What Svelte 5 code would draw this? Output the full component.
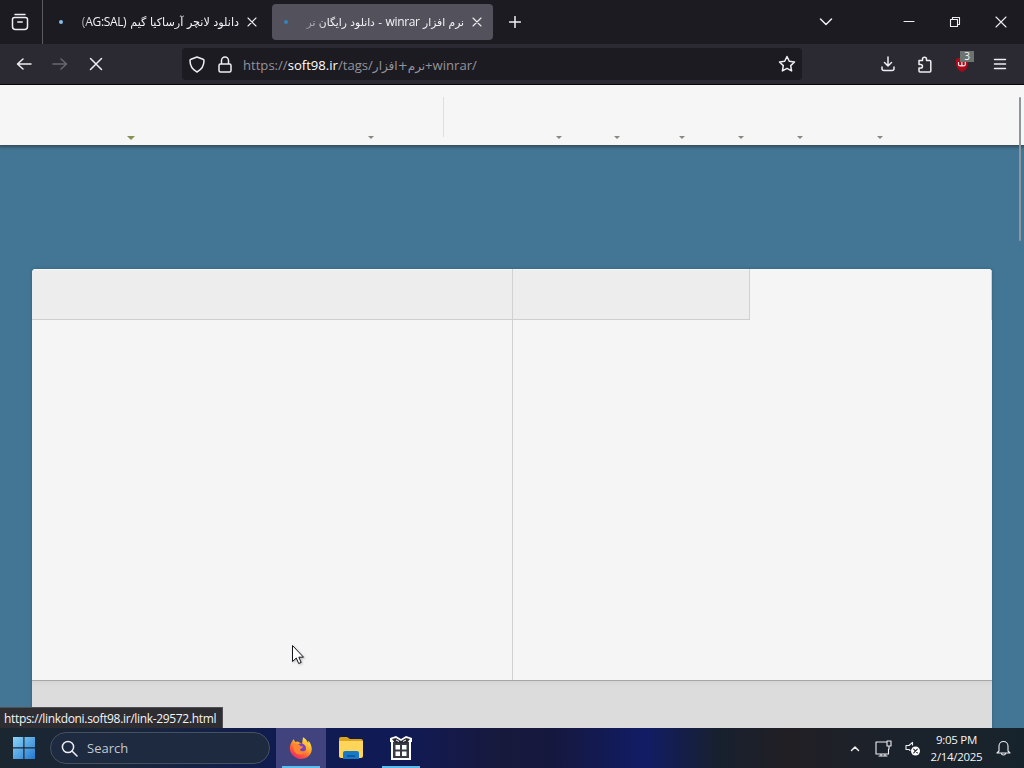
<script lang="ts">
	// Distance of each dropdown arrow from the left edge of the site menu
	const carets = [
		{ x: 131, wide: true },
		{ x: 371 },
		{ x: 559 },
		{ x: 617 },
		{ x: 682 },
		{ x: 741 },
		{ x: 800 },
		{ x: 880 }
	];
</script>

<div class="screen">
	<div class="tabbar">
		<div class="view">
			<svg width="18" height="18" viewBox="0 0 18 18" class="line">
				<path d="M4 1.5h10M3.5 4.5h11q2 0 2 2v7q0 3-3 3h-9q-3 0-3-3v-7q0-2 2-2zM6.8 9h4.4" />
			</svg>
		</div>
		<div class="tab first">
			<i class="dot"></i>
			<span class="title" dir="rtl">دانلود لانچر آرساکیا گیم <b class="latin">(AG:SAL)</b></span>
			<svg class="line thin close" width="10" height="10" viewBox="0 0 10 10"><path d="M1 1l8 8M9 1L1 9" /></svg>
		</div>
		<div class="tab active">
			<i class="dot"></i>
			<span class="title" dir="rtl">نرم افزار <b class="latin">winrar</b> - دانلود رایگان نر</span>
			<svg class="line thin close" width="10" height="10" viewBox="0 0 10 10"><path d="M1 1l8 8M9 1L1 9" /></svg>
		</div>
		<svg class="line plus" width="12" height="12" viewBox="0 0 12 12"><path d="M6 .5v11M.5 6h11" /></svg>
		<svg class="line all" width="14" height="8" viewBox="0 0 14 8"><path d="M1.500 1L7 6.500 12.500 1" /></svg>
		<div class="controls">
			<svg class="line thin" width="12" height="12" viewBox="0 0 12 12"><path d="M1 5.500h10" /></svg>
			<svg class="line thin" width="12" height="12" viewBox="0 0 12 12"><path d="M1.500 3.500h7v7h-7zM3.500 3V1.500h7v7H9" /></svg>
			<svg class="line thin" width="12" height="12" viewBox="0 0 12 12"><path d="M1 1l10 10M11 1L1 11" /></svg>
		</div>
	</div>

	<div class="toolbar">
		<div class="nav">
			<svg class="line" width="16" height="16" viewBox="0 0 16 16"><path d="M15 8H1.500M7 3L1.500 8 7 13" /></svg>
			<svg class="line disabled" width="16" height="16" viewBox="0 0 16 16"><path d="M1 8h13.500M9 3l5.500 5L9 13" /></svg>
			<svg class="line" width="16" height="16" viewBox="0 0 16 16"><path d="M2.500 2.500l11 11M13.500 2.500l-11 11" /></svg>
		</div>
		<div class="urlbar">
			<svg class="line" width="16" height="17" viewBox="0 0 16 17">
				<path d="M8 1l6 2.200q1 .4 1 1.400 0 8-7 11.400Q1 12.600 1 4.600q0-1 1-1.400z" />
			</svg>
			<svg class="line lock" width="14" height="17" viewBox="0 0 14 17">
				<path d="M3.500 8V4.500a3.500 3.500 0 0 1 7 0V8M2.500 8h9q1.500 0 1.500 1.500v5q0 1.500-1.500 1.500h-9Q1 16 1 14.500v-5Q1 8 2.500 8z" />
			</svg>
			<span class="url">https://<em>soft98.ir</em>/tags/<span class="arabic">نرم+افزار</span>+winrar/</span>
			<svg class="line star" width="18" height="18" viewBox="0 0 18 18">
				<path d="M9 1.500l2.300 4.800 5.200.7-3.800 3.600.9 5.300L9 13.400l-4.600 2.500.9-5.300L1.500 7l5.200-.7z" />
			</svg>
		</div>
		<div class="tools">
			<svg class="line" width="16" height="16" viewBox="0 0 16 16">
				<path d="M8 1v9M4.500 6.500L8 10l3.500-3.500M2 11v1.500q0 2 2 2h8q2 0 2-2V11" />
			</svg>
			<svg class="line" width="16" height="17" viewBox="0 0 16 17">
				<path d="M2 4.500h3.500V3.200a2 2 0 0 1 4 0v1.300h3.300q1 0 1 1V15q0 1-1 1H3q-1 0-1-1v-3h1.700a1.800 1.800 0 0 0 0-3.600H2z" />
			</svg>
			<div class="ublock">
				<svg width="18" height="18" viewBox="0 0 18 18">
					<path d="M8 2l6 2v5q0 5-6 8-6-3-6-8V4z" fill="#a90a1c" />
					<path d="M4.500 7v2.500q0 1.300 1.700 1.300t1.700-1.300V7m0 2.500q0 1.300 1.700 1.300t1.700-1.300V7" fill="none" stroke="#f7dfe0" stroke-width="1.200" />
				</svg>
				<span class="badge">3</span>
			</div>
			<svg class="line" width="14" height="12" viewBox="0 0 14 12"><path d="M1.500 1.500h11M1.500 6h11M1.500 10.500h11" /></svg>
		</div>
	</div>

	<main class="page">
		<header class="site-menu">
			<i class="divider"></i>
			{#each carets as caret}
				<i class="caret" class:wide={caret.wide} style="left: {caret.x}px"></i>
			{/each}
		</header>
		<section class="panel">
			<div class="headings">
				<div></div>
				<div></div>
				<div class="current"></div>
			</div>
			<div class="columns">
				<div></div>
				<div></div>
			</div>
			<div class="footer"></div>
		</section>
		<div class="scrollbar"></div>
		<div class="status">https://linkdoni.soft98.ir/link-29572.html</div>
		<svg class="cursor" width="16" height="22" viewBox="0 0 16 22">
			<path d="M1.500 1.500v16l3.800-3.500 2.400 5.500 2.500-1.100-2.400-5.200h4.700z" fill="#fff" stroke="#15151b" stroke-width="1" />
		</svg>
	</main>

	<footer class="taskbar">
		<svg class="start" width="22" height="22" viewBox="0 0 22 22">
			<defs>
				<linearGradient id="win" x2="1" y2="1">
					<stop stop-color="#8bd4f8" />
					<stop offset="1" stop-color="#2378cf" />
				</linearGradient>
			</defs>
			<path d="M0 0h10.300v10.300H0zM11.500 0H22v10.300H11.500zM0 11.500h10.300V22H0zM11.500 11.500H22V22H11.500z" fill="url(#win)" />
		</svg>
		<div class="search">
			<svg class="line" width="17" height="17" viewBox="0 0 17 17"><circle cx="7" cy="7" r="5.600" /><path d="M11 11l5 5" /></svg>
			<span>Search</span>
		</div>
		<div class="app focused">
			<svg width="24" height="24" viewBox="0 0 24 24">
				<defs>
					<linearGradient id="fox" x1=".85" y1="0" x2=".2" y2="1">
						<stop stop-color="#fff05a" />
						<stop offset=".4" stop-color="#ffab28" />
						<stop offset=".7" stop-color="#ff563b" />
						<stop offset="1" stop-color="#e42179" />
					</linearGradient>
				</defs>
				<path d="M2.500 6.500L4.500 3l1.800 3 2.500-.4L13 8l1-6.800c3 1.500 4.200 3.600 5 5.800l.5-2.200c4.500 5.400 4 11.500.5 15A11.400 11.400 0 0 1 1.200 15C.3 11.500 1.200 8.500 2.500 6.500z" fill="url(#fox)" />
				<circle cx="12" cy="12.500" r="5" fill="#7542c5" />
				<path d="M4 9.500c3-2.500 6-1.800 7.500.5l2.800.8c-.4 1.500-2.500 1.400-3.300 2.700.2 1.800 3.500 2.700 6 .5-1.200 5-9 6-11.300 1.800-1-1.800-1.200-4-1.700-6.300z" fill="#ff8630" />
			</svg>
		</div>
		<div class="app">
			<svg width="26" height="24" viewBox="0 0 26 24">
				<path d="M1 3q0-2 2-2h6l3 2h11q2 0 2 2v4H1z" fill="#dda51e" />
				<path d="M1 5h24v15q0 2-2 2H3q-2 0-2-2z" fill="#ffd65a" />
				<path d="M5 23v-6q0-2 2-2h12q2 0 2 2v6z" fill="#1678c6" />
				<path d="M9 20h8" stroke="#075298" stroke-width="1.500" />
			</svg>
		</div>
		<div class="app running">
			<svg width="24" height="26" viewBox="0 0 24 26">
				<path d="M1 3l6-2 5 3 5-3 6 2v4h-1v18H2V7H1z" fill="#fff" />
				<path d="M4 7h16v16H4z" fill="#393c45" />
				<path d="M6.500 10h4.500v4.500H6.500zM13 10h4.500v4.500H13zM6.500 16.500h4.500V21H6.500zM13 16.500h4.500V21H13z" fill="#fff" />
				<path d="M3 4l4-1 5 3 5-3 4 1-3 4-6 .5L6 8z" fill="#282b33" />
				<path d="M7 5l3 1.500M17 5l-3 1.500" stroke="#fff" />
			</svg>
		</div>
		<div class="tray">
			<svg class="line" width="10" height="7" viewBox="0 0 10 7"><path d="M1.500 5.500L5 2l3.500 3.500" /></svg>
			<svg class="line thin" width="17" height="17" viewBox="0 0 17 17">
				<path d="M11 2H1v12h12.500V9M4 16h8M6 14v2M10 14v2M12 1h4v5h-4zM14 6v3" />
			</svg>
			<svg class="line thin" width="16" height="15" viewBox="0 0 16 15">
				<path d="M5 9.500L4 8.500H1V4.500h3l3.500-3.200V4" />
				<circle cx="10.500" cy="10" r="4.500" fill="#fff" stroke="none" />
				<path d="M8.700 8.200l3.600 3.600M12.300 8.200l-3.600 3.600" stroke="#20252d" />
			</svg>
			<div class="clock"><span>9:05 PM</span><span>2/14/2025</span></div>
			<svg class="line thin bell" width="15" height="16" viewBox="0 0 15 16">
				<path d="M3 11V6a4.500 4.500 0 0 1 9 0v5l2 2H1zM5.500 13.500q0 1.500 2 1.500t2-1.500" />
			</svg>
		</div>
	</footer>
</div>

<style>
	:global(body) {
		margin: 0;
		overflow: hidden;
	}

	.screen {
		width: 1024px;
		height: 768px;
		display: flex;
		flex-direction: column;
		color: #f4f4f6;
		font: 12px 'Open Sans', 'DejaVu Sans', sans-serif;
		box-sizing: border-box;
	}

	.screen * {
		box-sizing: border-box;
	}

	svg {
		display: block;
		flex: none;
	}

	.line {
		fill: none;
		stroke: #eeeef2;
		stroke-width: 1.5;
		stroke-linecap: round;
		stroke-linejoin: round;
	}

	.thin {
		stroke-width: 1.1;
	}

	.tabbar {
		height: 44px;
		display: flex;
		align-items: center;
		background: #1c1b22;
	}

	.view {
		width: 43px;
		height: 44px;
		padding: 13px 0 0 11px;
		border-right: 1px solid #5b5b61;
	}

	.tab {
		width: 221px;
		height: 36px;
		display: flex;
		align-items: center;
		border-radius: 4px;
		padding: 0 11px 0 12px;
	}

	.first {
		margin-left: 4px;
		margin-right: 4px;
	}

	.active {
		background: #53515c;
	}

	.dot {
		width: 4px;
		height: 4px;
		border-radius: 50%;
		background: #86bde8;
	}

	.active .dot {
		background: #3684bd;
	}

	.title {
		width: 164px;
		margin-left: 12px;
		padding-top: 2px;
		overflow: hidden;
		white-space: nowrap;
		font: 11.2px/24px 'DejaVu Sans', sans-serif;
		mask-image: linear-gradient(to right, #0004, #000 16px);
	}

	.active .title {
		font-size: 10.7px;
		mask-image: linear-gradient(to right, #0002, #000 26px);
	}

	.latin {
		font: 12px 'Open Sans', sans-serif;
		letter-spacing: -0.35px;
	}

	.close {
		margin-left: auto;
	}

	.plus {
		margin-left: 16px;
	}

	.all {
		margin-left: 298px;
	}

	.controls {
		display: flex;
		gap: 34px;
		margin-left: auto;
		margin-right: 17px;
	}

	.toolbar {
		height: 41px;
		display: flex;
		align-items: center;
		background: #2b2a32;
		border-bottom: 1px solid #08080b;
	}

	.nav {
		width: 182px;
		display: flex;
		gap: 20px;
		padding-left: 16px;
	}

	.disabled {
		stroke: #68676e;
	}

	.urlbar {
		width: 620px;
		height: 32px;
		display: flex;
		align-items: center;
		background: #1c1b22;
		border-radius: 4px;
		padding: 0 6px 0 7px;
	}

	.lock {
		margin-left: 13px;
	}

	.url {
		margin-left: 11px;
		padding-top: 1px;
		white-space: nowrap;
		color: #94939b;
		font-size: 13.1px;
	}

	.url em {
		font-style: normal;
		color: #fff;
	}

	.arabic {
		font: 12px 'DejaVu Sans', sans-serif;
	}

	.star {
		margin-left: auto;
	}

	.tools {
		flex: 1;
		display: flex;
		align-items: center;
		justify-content: space-between;
		padding: 0 17px 0 78px;
	}

	.ublock {
		position: relative;
	}

	.badge {
		position: absolute;
		left: 6px;
		top: -4px;
		width: 14px;
		height: 11px;
		background: #6d7470;
		font-size: 10px;
		line-height: 11px;
		text-align: center;
	}

	.page {
		position: relative;
		height: 643px;
		background: #437594;
		overflow: hidden;
	}

	.site-menu {
		position: relative;
		height: 60px;
		display: flex;
		padding: 12px 0 8px 443px;
		background: #f6f6f6;
		box-shadow: 0 1px 3px 1px #344a58;
	}

	.divider {
		border-left: 1px solid #dedede;
	}

	.caret {
		position: absolute;
		top: 51px;
		margin-left: -3px;
		border: 3px solid transparent;
		border-top-color: #888880;
		border-bottom: 0;
	}

	.wide {
		margin-left: -4px;
		border-width: 4px 4px 0;
		border-top-color: #879052;
	}

	.panel {
		width: 960px;
		height: 459px;
		margin: 124px 32px 0;
		display: flex;
		flex-direction: column;
		background: #f5f5f5;
		border-radius: 4px 4px 0 0;
		overflow: hidden;
		box-shadow: 0 0 3px #315d75;
	}

	.headings {
		height: 51px;
		display: grid;
		grid-template-columns: 481px 237px 242px;
	}

	.headings > div {
		background: #ededed;
		border-right: 1px solid #d1d1d1;
		border-bottom: 1px solid #cfcfcf;
		box-shadow: inset 0 1px #f6f6f6;
	}

	.headings > .current {
		background: #f5f5f5;
		border-bottom: 0;
	}

	.columns {
		height: 361px;
		display: grid;
		grid-template-columns: 481px 1fr;
		border-bottom: 1px solid #a7a7a7;
	}

	.columns > div:first-child {
		border-right: 1px solid #d1d1d1;
	}

	.footer {
		flex: 1;
		background: linear-gradient(#d5d5d5, #dcdcdc 5px);
	}

	.scrollbar {
		position: absolute;
		right: 3px;
		top: 12px;
		width: 2px;
		height: 144px;
		border-radius: 1px;
		background: #8b969d;
	}

	.status {
		position: absolute;
		left: 0;
		bottom: 0;
		width: 223px;
		height: 21px;
		padding-left: 4px;
		line-height: 21px;
		white-space: nowrap;
		letter-spacing: -0.33px;
		background: #2e2d32;
		border: solid #515155;
		border-width: 1px 1px 0 0;
	}

	.cursor {
		position: absolute;
		left: 291px;
		top: 559px;
		filter: drop-shadow(1px 1px 1px #8888);
	}

	.taskbar {
		height: 40px;
		display: flex;
		align-items: center;
		background: linear-gradient(90deg, #1a2630 0, #1a263a 12%, #101c50 27%, #101a56 39%, #17193c 49%, #15183e 54%, #111c65 63%, #17202f 70%, #211f24 77%, #1b222b 87%, #17232c);
	}

	.start {
		margin: 0 15px 0 13px;
	}

	.search {
		width: 220px;
		height: 32px;
		display: flex;
		align-items: center;
		gap: 9px;
		padding-left: 10px;
		border: 1px solid #46515f;
		border-radius: 16px;
		background: #1d2a40;
		font-size: 13px;
		color: #c3c8ce;
		margin-right: 6px;
	}

	.app {
		width: 50px;
		height: 40px;
		display: grid;
		place-items: center;
	}

	.focused {
		background: #40437e;
	}

	.focused,
	.running {
		background-image: linear-gradient(#5bbced, #5bbced);
		background-size: 38px 2px;
		background-repeat: no-repeat;
		background-position: center bottom;
	}

	.tray {
		display: flex;
		align-items: center;
		margin-left: auto;
		padding-right: 13px;
	}

	.tray > svg:nth-child(2) {
		margin-left: 15px;
	}

	.tray > svg:nth-child(3) {
		margin-left: 13px;
	}

	.clock {
		width: 65px;
		margin-left: 3px;
		display: flex;
		flex-direction: column;
		align-items: center;
		line-height: 17px;
		font-size: 11.5px;
		letter-spacing: -0.3px;
	}

	.tray > .bell {
		margin-left: 7px;
	}
</style>
